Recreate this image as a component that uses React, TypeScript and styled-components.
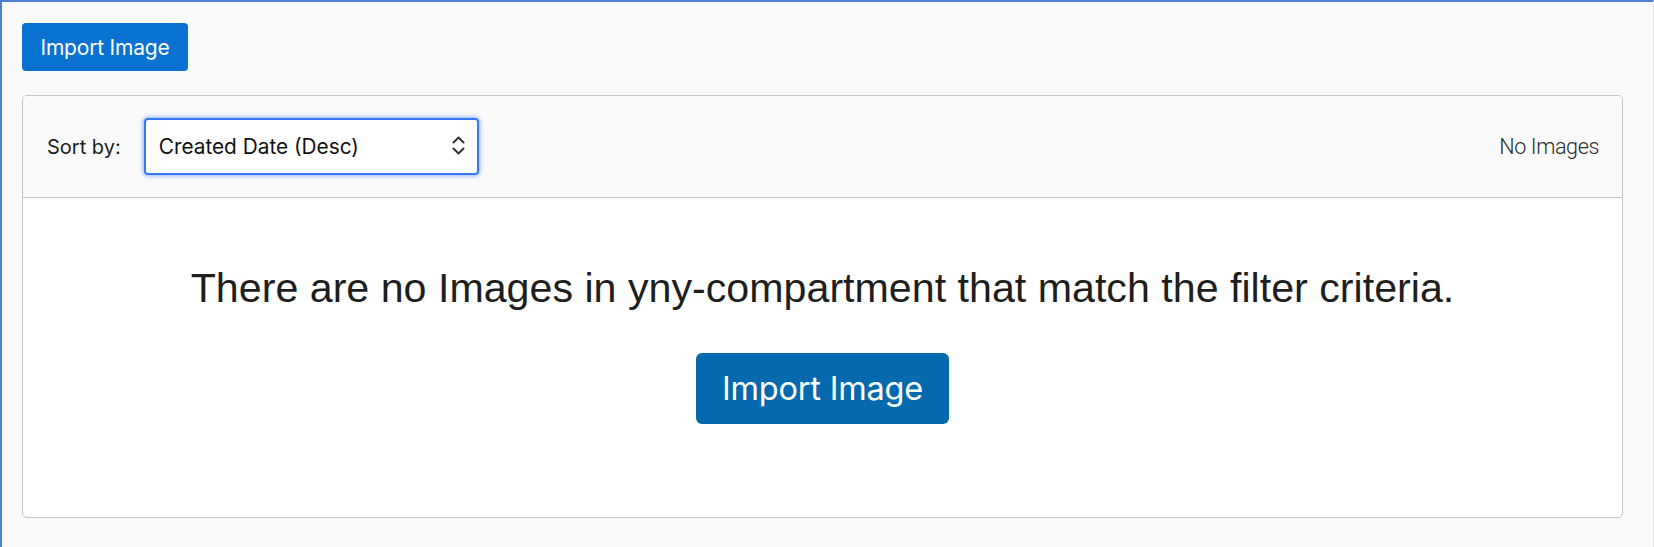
import React from "react";
import styled, { createGlobalStyle } from "styled-components";

const Global = createGlobalStyle`
  html, body {
    margin: 0;
    padding: 0;
    background: #fafafa;
  }
  * { box-sizing: border-box; }
`;

const Page = styled.div`
  height: 547px;
  background: #fafafa;
  border-top: 2px solid #4f7fd4;
  border-left: 2px solid #4f7fd4;
  border-right: 1px solid #e6e6e6;
  padding: 21px 30px 0 20px;
  display: flex;
  flex-direction: column;
  align-items: flex-start;
  gap: 24px;
  font-family: Inter, "Liberation Sans", sans-serif;
`;

const Button = styled.button<{ $large?: boolean }>`
  border: none;
  border-radius: ${(p) => (p.$large ? "6px" : "4px")};
  background: ${(p) => (p.$large ? "#056aad" : "#0a72d1")};
  color: #ffffff;
  font-family: Inter, "Liberation Sans", sans-serif;
  font-size: ${(p) => (p.$large ? "32.5px" : "21px")};
  font-weight: 400;
  height: ${(p) => (p.$large ? "71px" : "48px")};
  width: ${(p) => (p.$large ? "253px" : "166px")};
  padding: 0;
  letter-spacing: -0.2px;
  cursor: pointer;
  display: flex;
  align-items: center;
  justify-content: center;
`;

const Panel = styled.section`
  width: 1601px;
  height: 423px;
  border: 1px solid #c3c6cb;
  border-radius: 5px;
  background: #ffffff;
  display: flex;
  flex-direction: column;
  overflow: hidden;
`;

const Toolbar = styled.div`
  height: 102px;
  flex: none;
  background: #fafafa;
  border-bottom: 1px solid #c3c6cb;
  display: flex;
  align-items: center;
  padding: 0 23px 0 24px;
  gap: 23px;
`;

const Label = styled.span`
  font-family: Inter, "Liberation Sans", sans-serif;
  font-size: 20px;
  color: #1c1c1c;
`;

const SelectWrap = styled.div`
  position: relative;
  width: 335px;
  height: 57px;
  margin-top: -1px;
`;

const Select = styled.select`
  appearance: none;
  -webkit-appearance: none;
  width: 100%;
  height: 100%;
  border: 2.5px solid #3478f6;
  border-radius: 4px;
  box-shadow: 0 0 4px 1px rgba(70, 130, 246, 0.6);
  background: #ffffff;
  padding: 0 40px 0 13px;
  font-family: Inter, "Liberation Sans", sans-serif;
  font-size: 20.8px;
  color: #111111;
  outline: none;
`;

const Chevron = styled.svg`
  position: absolute;
  right: 14px;
  top: 15px;
  pointer-events: none;
`;

const Spacer = styled.div`
  flex: 1;
`;

const Count = styled.span`
  font-family: Roboto, "Liberation Sans", sans-serif;
  font-weight: 300;
  font-size: 21.6px;
  color: #2a2a2a;
  letter-spacing: -0.4px;
`;

const Body = styled.div`
  flex: 1;
  display: flex;
  flex-direction: column;
  align-items: center;
  padding-top: 66px;
  gap: 41px;
`;

const Message = styled.p`
  margin: 0;
  font-family: "Liberation Sans", Arial, sans-serif;
  font-size: 41.2px;
  line-height: 48px;
  color: #1e1e1e;
`;

export default function App() {
  return (
    <>
      <Global />
      <Page>
        <Button>Import Image</Button>
        <Panel>
          <Toolbar>
            <Label>Sort by:</Label>
            <SelectWrap>
              <Select defaultValue="created-desc">
                <option value="created-desc">Created Date (Desc)</option>
                <option value="created-asc">Created Date (Asc)</option>
                <option value="name-asc">Name (Asc)</option>
              </Select>
              <Chevron width="13" height="25" viewBox="0 0 13 25" fill="none">
                <path d="M1.5 9.5 L6.5 4.5 L11.5 9.5" stroke="#333" strokeWidth="2" strokeLinecap="round" strokeLinejoin="round" />
                <path d="M1.5 15.5 L6.5 20.5 L11.5 15.5" stroke="#333" strokeWidth="2" strokeLinecap="round" strokeLinejoin="round" />
              </Chevron>
            </SelectWrap>
            <Spacer />
            <Count>No Images</Count>
          </Toolbar>
          <Body>
            <Message>There are no Images in yny-compartment that match the filter criteria.</Message>
            <Button $large>Import Image</Button>
          </Body>
        </Panel>
      </Page>
    </>
  );
}
